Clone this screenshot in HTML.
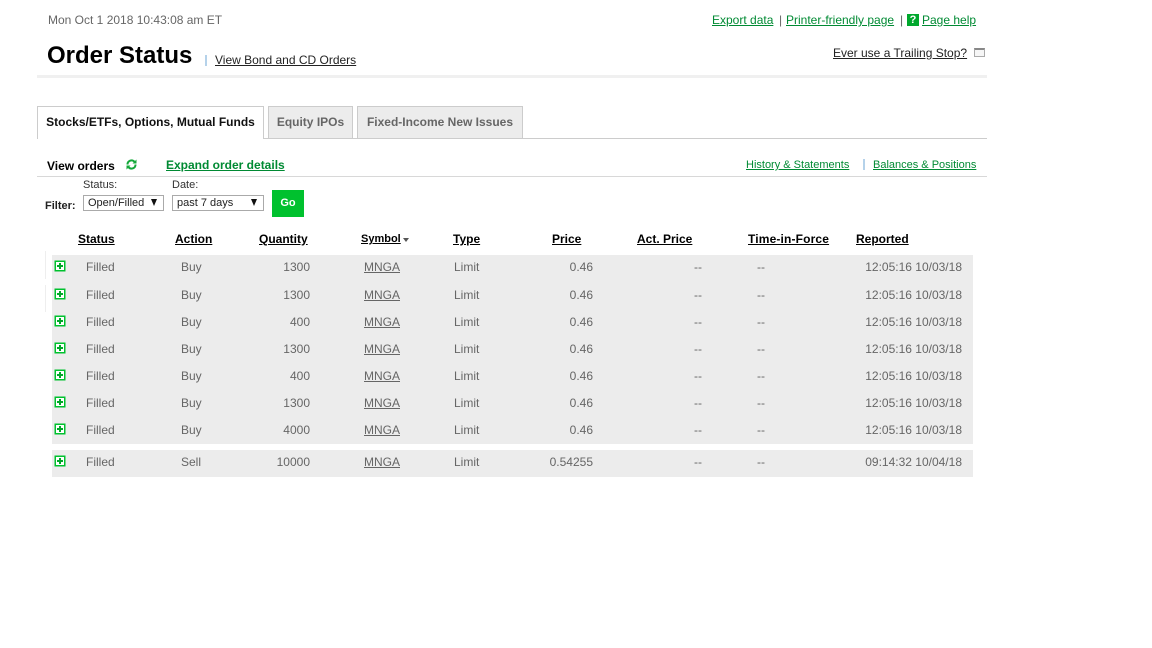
<!DOCTYPE html>
<html><head><meta charset="utf-8"><title>Order Status</title>
<style>
html,body{margin:0;padding:0;background:#fff;width:1152px;height:648px;overflow:hidden}
body{font-family:"Liberation Sans",sans-serif;font-size:12px;color:#666;position:relative}
div,a,span.a{position:absolute;white-space:nowrap}
.t{line-height:14px;height:14px}
.r{text-align:right}
a{color:#000;text-decoration:underline}
a.g{color:#008a33}
.h{font-weight:bold;color:#000}
.bar{background:#b5d2ea;width:2px}
.bg{background:#ececec;left:52px;width:921px}
.ln{background:#eee;left:45px;width:1px}
.ic{left:55px;width:8px;height:8px;border:1px solid #00c12e;background:#fff;box-shadow:0 0 0 .5px #00c12e}
.ic:before{content:"";position:absolute;left:1px;top:3px;width:6px;height:2px;background:#00a828}
.ic:after{content:"";position:absolute;left:3px;top:1px;width:2px;height:6px;background:#00a828}
.sel{height:14px;border:1px solid #aaa;background:#fff;line-height:14px;font-size:11px;color:#222}
.arr{width:0;height:0;border-left:3.5px solid transparent;border-right:3.5px solid transparent;border-top:7px solid #111;top:3px}
.tab{top:106px;height:31px;line-height:31px;background:#ececec;border:1px solid #ccc;border-bottom:none;font-weight:bold;color:#666;text-align:center;font-size:12px}
</style></head><body>
<div class="t" style="left:48px;top:13px;color:#666">Mon Oct 1 2018 10:43:08 am ET</div>
<div style="left:47px;top:42px;font-size:24px;line-height:28px;font-weight:bold;color:#000">Order Status</div>
<div class="bar" style="left:205px;top:55px;height:11px"></div>
<a class="t" style="left:215px;top:53px;color:#222">View Bond and CD Orders</a>
<a class="t g" style="left:712px;top:13px">Export data</a>
<div class="t" style="left:779px;top:13px;color:#666">|</div>
<a class="t g" style="left:786px;top:13px">Printer-friendly page</a>
<div class="t" style="left:900px;top:13px;color:#666">|</div>
<div style="left:907px;top:14px;width:12px;height:12px;background:#00a82d;color:#fff;font-weight:bold;font-size:11px;line-height:12px;text-align:center">?</div>
<a class="t g" style="left:922px;top:13px">Page help</a>
<a class="t" style="left:833px;top:46px;color:#222">Ever use a Trailing Stop?</a>
<div style="left:974px;top:48px;width:9px;height:6px;border:1px solid #aaa;border-top:2px solid #888;background:#f6f6f6"></div>
<div style="left:37px;top:75px;width:950px;height:3px;background:#f0f0f0"></div>

<div style="left:37px;top:138px;width:950px;height:1px;background:#ccc"></div>
<div class="tab" style="left:37px;width:225px;background:#fff;color:#111;height:32px;z-index:2">Stocks/ETFs, Options, Mutual Funds</div>
<div class="tab" style="left:268px;width:83px">Equity IPOs</div>
<div class="tab" style="left:357px;width:164px">Fixed-Income New Issues</div>

<div class="t h" style="left:47px;top:159px">View orders</div>
<svg style="position:absolute;left:126px;top:159px" width="11" height="11" viewBox="0 0 11 11"><path d="M1.5 5.500A4 4 0 0 1 8.500 2.800M9.500 5.500A4 4 0 0 1 2.500 8.200" fill="none" stroke="#14a83a" stroke-width="2"/><path d="M10.500 .5V4.500H6.500ZM.5 10.500V6.500H4.500Z" fill="#14a83a"/></svg>
<a class="t g" style="left:166px;top:158px;font-weight:bold">Expand order details</a>
<a class="t g" style="left:746px;top:158px;font-size:11px">History &amp; Statements</a>
<div class="bar" style="left:863px;top:159px;height:11px"></div>
<a class="t g" style="left:873px;top:158px;font-size:11px">Balances &amp; Positions</a>
<div style="left:37px;top:176px;width:950px;height:1px;background:#d8d8d8"></div>

<div class="t" style="left:83px;top:178px;font-size:11px;color:#333">Status:</div>
<div class="t" style="left:172px;top:178px;font-size:11px;color:#333">Date:</div>
<div class="t" style="left:45px;top:199px;font-size:11px;font-weight:bold;color:#222">Filter:</div>
<div class="sel" style="left:83px;top:195px;width:79px"><span style="margin-left:4px">Open/Filled</span><div class="arr" style="left:67px"></div></div>
<div class="sel" style="left:172px;top:195px;width:90px"><span style="margin-left:4px">past 7 days</span><div class="arr" style="left:78px"></div></div>
<div style="left:272px;top:190px;width:32px;height:27px;background:#00c12e;color:#fff;font-weight:bold;font-size:11px;line-height:27px;text-align:center">Go</div>

<a class="t h" style="left:78px;top:232px">Status</a>
<a class="t h" style="left:175px;top:232px">Action</a>
<a class="t h" style="left:259px;top:232px">Quantity</a>
<a class="t h" style="left:361px;top:232px;font-size:11px">Symbol</a>
<div style="left:403px;top:238px;width:0;height:0;border:3.5px solid transparent;border-top:4px solid #555;border-bottom:0"></div>
<a class="t h" style="left:453px;top:232px">Type</a>
<a class="t h" style="left:552px;top:232px">Price</a>
<a class="t h" style="left:637px;top:232px">Act. Price</a>
<a class="t h" style="left:748px;top:232px;letter-spacing:.15px">Time-in-Force</a>
<a class="t h" style="left:856px;top:232px">Reported</a>

<div class="bg" style="top:255px;height:189px"></div>
<div class="bg" style="top:450px;height:27px"></div>
<div class="ln" style="top:251px;height:28px"></div>
<div class="ln" style="top:285px;height:27px"></div>

<div class="ic" style="top:261px"></div><div class="t" style="left:86px;top:260px">Filled</div><div class="t" style="left:181px;top:260px">Buy</div><div class="t r" style="left:260px;width:50px;top:260px">1300</div><a class="t" style="left:364px;top:260px;color:#666">MNGA</a><div class="t" style="left:454px;top:260px">Limit</div><div class="t r" style="left:543px;width:50px;top:260px">0.46</div><div class="t r" style="left:652px;width:50px;top:260px">--</div><div class="t" style="left:757px;top:260px">--</div><div class="t r" style="left:842px;width:120px;top:260px">12:05:16 10/03/18</div>
<div class="ic" style="top:289px"></div><div class="t" style="left:86px;top:288px">Filled</div><div class="t" style="left:181px;top:288px">Buy</div><div class="t r" style="left:260px;width:50px;top:288px">1300</div><a class="t" style="left:364px;top:288px;color:#666">MNGA</a><div class="t" style="left:454px;top:288px">Limit</div><div class="t r" style="left:543px;width:50px;top:288px">0.46</div><div class="t r" style="left:652px;width:50px;top:288px">--</div><div class="t" style="left:757px;top:288px">--</div><div class="t r" style="left:842px;width:120px;top:288px">12:05:16 10/03/18</div>
<div class="ic" style="top:316px"></div><div class="t" style="left:86px;top:315px">Filled</div><div class="t" style="left:181px;top:315px">Buy</div><div class="t r" style="left:260px;width:50px;top:315px">400</div><a class="t" style="left:364px;top:315px;color:#666">MNGA</a><div class="t" style="left:454px;top:315px">Limit</div><div class="t r" style="left:543px;width:50px;top:315px">0.46</div><div class="t r" style="left:652px;width:50px;top:315px">--</div><div class="t" style="left:757px;top:315px">--</div><div class="t r" style="left:842px;width:120px;top:315px">12:05:16 10/03/18</div>
<div class="ic" style="top:343px"></div><div class="t" style="left:86px;top:342px">Filled</div><div class="t" style="left:181px;top:342px">Buy</div><div class="t r" style="left:260px;width:50px;top:342px">1300</div><a class="t" style="left:364px;top:342px;color:#666">MNGA</a><div class="t" style="left:454px;top:342px">Limit</div><div class="t r" style="left:543px;width:50px;top:342px">0.46</div><div class="t r" style="left:652px;width:50px;top:342px">--</div><div class="t" style="left:757px;top:342px">--</div><div class="t r" style="left:842px;width:120px;top:342px">12:05:16 10/03/18</div>
<div class="ic" style="top:370px"></div><div class="t" style="left:86px;top:369px">Filled</div><div class="t" style="left:181px;top:369px">Buy</div><div class="t r" style="left:260px;width:50px;top:369px">400</div><a class="t" style="left:364px;top:369px;color:#666">MNGA</a><div class="t" style="left:454px;top:369px">Limit</div><div class="t r" style="left:543px;width:50px;top:369px">0.46</div><div class="t r" style="left:652px;width:50px;top:369px">--</div><div class="t" style="left:757px;top:369px">--</div><div class="t r" style="left:842px;width:120px;top:369px">12:05:16 10/03/18</div>
<div class="ic" style="top:397px"></div><div class="t" style="left:86px;top:396px">Filled</div><div class="t" style="left:181px;top:396px">Buy</div><div class="t r" style="left:260px;width:50px;top:396px">1300</div><a class="t" style="left:364px;top:396px;color:#666">MNGA</a><div class="t" style="left:454px;top:396px">Limit</div><div class="t r" style="left:543px;width:50px;top:396px">0.46</div><div class="t r" style="left:652px;width:50px;top:396px">--</div><div class="t" style="left:757px;top:396px">--</div><div class="t r" style="left:842px;width:120px;top:396px">12:05:16 10/03/18</div>
<div class="ic" style="top:424px"></div><div class="t" style="left:86px;top:423px">Filled</div><div class="t" style="left:181px;top:423px">Buy</div><div class="t r" style="left:260px;width:50px;top:423px">4000</div><a class="t" style="left:364px;top:423px;color:#666">MNGA</a><div class="t" style="left:454px;top:423px">Limit</div><div class="t r" style="left:543px;width:50px;top:423px">0.46</div><div class="t r" style="left:652px;width:50px;top:423px">--</div><div class="t" style="left:757px;top:423px">--</div><div class="t r" style="left:842px;width:120px;top:423px">12:05:16 10/03/18</div>
<div class="ic" style="top:456px"></div><div class="t" style="left:86px;top:455px">Filled</div><div class="t" style="left:181px;top:455px">Sell</div><div class="t r" style="left:260px;width:50px;top:455px">10000</div><a class="t" style="left:364px;top:455px;color:#666">MNGA</a><div class="t" style="left:454px;top:455px">Limit</div><div class="t r" style="left:543px;width:50px;top:455px">0.54255</div><div class="t r" style="left:652px;width:50px;top:455px">--</div><div class="t" style="left:757px;top:455px">--</div><div class="t r" style="left:842px;width:120px;top:455px">09:14:32 10/04/18</div>
</body></html>
